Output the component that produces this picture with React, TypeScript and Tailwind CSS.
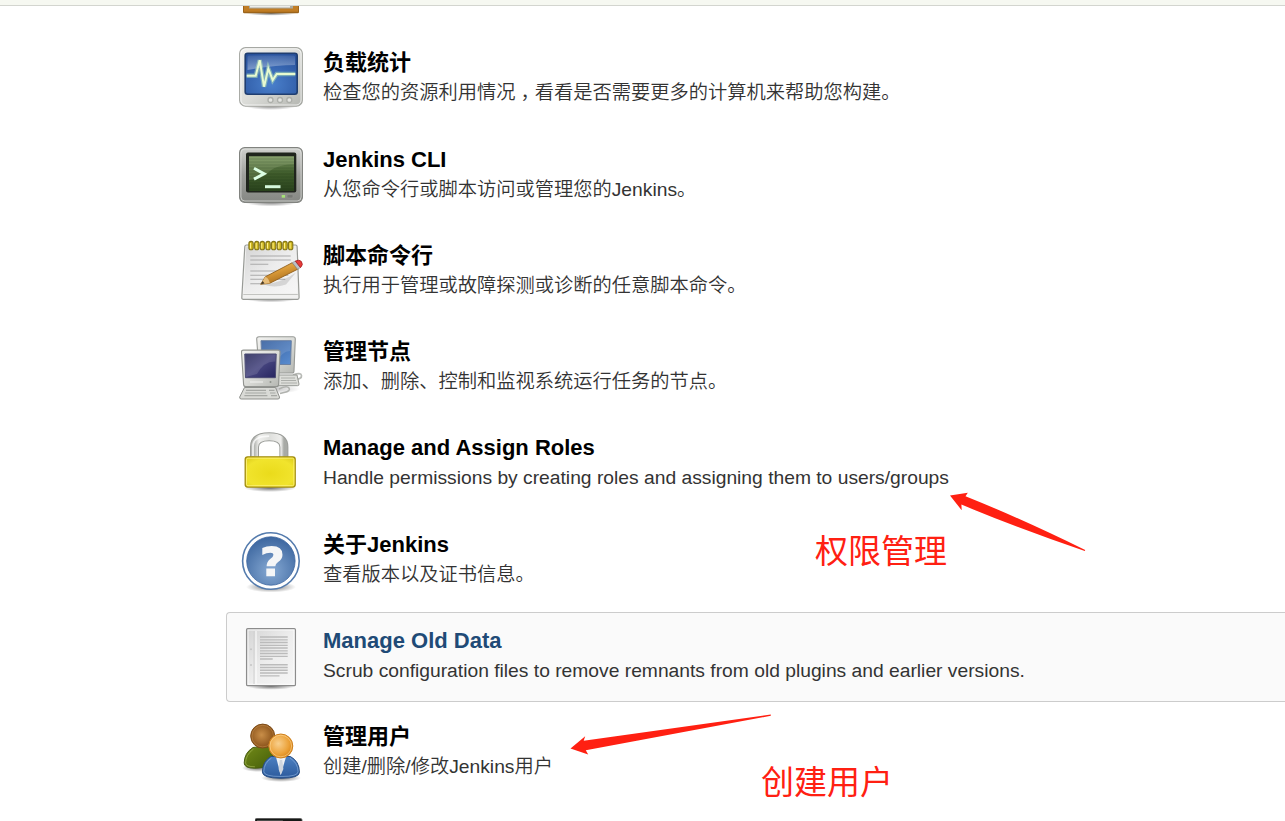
import type { ReactNode } from "react";

function Icon({ children }: { children: ReactNode }) {
  return (
    <svg className="block h-16 w-16 shrink-0 overflow-visible" viewBox="0 0 64 64">
      {children}
    </svg>
  );
}

function Gradients() {
  return (
    <svg className="absolute h-0 w-0" aria-hidden="true">
      <defs>
        <linearGradient id="case" x1="0" y1="0" x2="1" y2="1">
          <stop offset="0" stopColor="#f2f2f0" />
          <stop offset="0.5" stopColor="#dcddd9" />
          <stop offset="1" stopColor="#b4b6b1" />
        </linearGradient>
        <linearGradient id="caseDark" x1="0" y1="0" x2="0" y2="1">
          <stop offset="0" stopColor="#d0d1ce" />
          <stop offset="0.5" stopColor="#9fa09c" />
          <stop offset="1" stopColor="#858783" />
        </linearGradient>
        <radialGradient id="blue" cx="0.5" cy="0.75" r="0.8">
          <stop offset="0" stopColor="#4a80cc" />
          <stop offset="1" stopColor="#27509a" />
        </radialGradient>
        <linearGradient id="gloss" x1="0" y1="0" x2="0" y2="1">
          <stop offset="0" stopColor="#fff" stopOpacity="0.1" />
          <stop offset="1" stopColor="#fff" stopOpacity="0.36" />
        </linearGradient>
        <linearGradient id="green" x1="0" y1="0" x2="0" y2="1">
          <stop offset="0" stopColor="#7a9560" />
          <stop offset="0.5" stopColor="#3f5c2b" />
          <stop offset="1" stopColor="#2a431d" />
        </linearGradient>
        <linearGradient id="navy" x1="0" y1="0" x2="1" y2="1">
          <stop offset="0" stopColor="#252657" />
          <stop offset="0.5" stopColor="#46457f" />
          <stop offset="1" stopColor="#26245f" />
        </linearGradient>
        <linearGradient id="screen" x1="0" y1="0" x2="1" y2="1">
          <stop offset="0" stopColor="#315b9c" />
          <stop offset="1" stopColor="#5a8dd0" />
        </linearGradient>
        <linearGradient id="pencil" x1="0" y1="0" x2="0.5" y2="1">
          <stop offset="0" stopColor="#f5cc73" />
          <stop offset="0.5" stopColor="#d99a38" />
          <stop offset="1" stopColor="#a66a19" />
        </linearGradient>
        <radialGradient id="yellow" cx="0.5" cy="0.55" r="0.75">
          <stop offset="0" stopColor="#eadb1b" />
          <stop offset="0.65" stopColor="#f1e42d" />
          <stop offset="1" stopColor="#d7c516" />
        </radialGradient>
        <linearGradient id="metal" x1="0" y1="0" x2="1" y2="0">
          <stop offset="0" stopColor="#b5b7b3" />
          <stop offset="0.15" stopColor="#f0f0ee" />
          <stop offset="0.5" stopColor="#dedfdc" />
          <stop offset="0.9" stopColor="#eeeeec" />
          <stop offset="1" stopColor="#a8aaa6" />
        </linearGradient>
        <radialGradient id="help" cx="0.5" cy="0.7" r="0.7">
          <stop offset="0" stopColor="#86a9d3" />
          <stop offset="1" stopColor="#3c669f" />
        </radialGradient>
        <radialGradient id="brown" cx="0.45" cy="0.45" r="0.55">
          <stop offset="0" stopColor="#c98e48" />
          <stop offset="1" stopColor="#885018" />
        </radialGradient>
        <radialGradient id="orange" cx="0.4" cy="0.4" r="0.6">
          <stop offset="0" stopColor="#f8cf8d" />
          <stop offset="0.7" stopColor="#eca33b" />
          <stop offset="1" stopColor="#dc8a1d" />
        </radialGradient>
        <linearGradient id="olive" x1="0" y1="0" x2="1" y2="1">
          <stop offset="0" stopColor="#738b19" />
          <stop offset="1" stopColor="#445d08" />
        </linearGradient>
        <linearGradient id="shirt" x1="0" y1="0" x2="0" y2="1">
          <stop offset="0" stopColor="#4d80c1" />
          <stop offset="1" stopColor="#2c5a9c" />
        </linearGradient>
        <linearGradient id="paper" x1="0" y1="0" x2="1" y2="1">
          <stop offset="0" stopColor="#d4d4d4" />
          <stop offset="0.5" stopColor="#ededed" />
          <stop offset="1" stopColor="#f6f6f6" />
        </linearGradient>
        <radialGradient id="shade">
          <stop offset="0" stopColor="#000" stopOpacity="0.55" />
          <stop offset="1" stopColor="#000" stopOpacity="0" />
        </radialGradient>
      </defs>
    </svg>
  );
}

const LoadIcon = () => (
  <Icon>
    <ellipse cx="32" cy="58.5" rx="27" ry="4.5" fill="url(#shade)" />
    <rect x="0.6" y="0.6" width="62.8" height="58.6" rx="6" fill="url(#case)" stroke="#a6a8a3" strokeWidth="1.1" />
    <rect x="1.9" y="1.8" width="60.2" height="56.2" rx="5" fill="none" stroke="#fff" strokeOpacity="0.7" />
    <rect x="6.2" y="6.2" width="52" height="41" rx="2.5" fill="url(#blue)" stroke="#203e70" strokeWidth="1.6" />
    <path d="M8.5 10q0-1.5 1.5-1.5h44.5q1.5 0 1.5 1.5v8Q35 18 8.5 23z" fill="url(#gloss)" />
    <path d="M7.7 28.7h9l4-15.5 4.3 26.5 4.3-18 4.4 11.3 4-6h18.6" fill="none" stroke="#b8e7b5" strokeOpacity="0.5" strokeWidth="4.4" />
    <path d="M7.7 28.7h9l4-15.5 4.3 26.5 4.3-18 4.4 11.3 4-6h18.6" fill="none" stroke="#e7fad0" strokeWidth="2" />
    {[31.5, 41, 50.3].map((x) => (
      <circle key={x} cx={x} cy="53" r="2.5" fill="#e4e5e2" stroke="#adafaa" strokeWidth="1.3" />
    ))}
  </Icon>
);

const TerminalIcon = () => (
  <Icon>
    <ellipse cx="32" cy="59" rx="27" ry="4.5" fill="url(#shade)" />
    <rect x="0.6" y="4.7" width="62.8" height="54.6" rx="5" fill="url(#caseDark)" stroke="#81837f" strokeWidth="1.2" />
    <rect x="1.9" y="6" width="60.2" height="52" rx="4" fill="none" stroke="#e6e7e4" strokeOpacity="0.7" />
    <rect x="7" y="9.5" width="50.3" height="40" rx="2" fill="#20251d" />
    <rect x="10" y="13.3" width="45" height="34.7" fill="url(#green)" />
    <path d="M10 13.3h45v8Q35 22 28 31 20 37 10 37z" fill="#b5c99c" fillOpacity="0.22" />
    {[16, 19, 22, 25, 28, 31, 34, 37, 40, 43, 46].map((y) => (
      <path key={y} d={`M10 ${y}h45`} stroke="#142e0c" strokeOpacity="0.16" />
    ))}
    <path d="M15 25.3l10 5.4-10 5.4" fill="none" stroke="#dcffe4" strokeWidth="3" />
    <path d="M26 43.7h15.5" stroke="#d5f8dc" strokeWidth="3" />
    <rect x="42.7" y="52" width="3.4" height="2.7" fill="#a5e276" />
    <rect x="48" y="51.6" width="6" height="3.4" rx="1" fill="#777975" stroke="#92948f" strokeWidth="0.7" />
  </Icon>
);

const NotepadIcon = () => (
  <Icon>
    <ellipse cx="32" cy="59.5" rx="27" ry="4" fill="url(#shade)" />
    <path d="M7.5 6h49q1.5 0 1.6 1.5l2 51q0 1.8-1.6 1.8h-54q-1.8 0-1.7-1.8l3-51Q6 6 7.5 6z" fill="#f1f1f0" stroke="#989a96" strokeWidth="1.2" />
    <path d="M7.3 7.5h49.5L58.2 54H5z" fill="url(#paper)" />
    <path d="M4.3 55.5h54.5" stroke="#c3c4c1" strokeWidth="1.2" />
    <g stroke="#aaa" strokeWidth="1.1">
      <path d="M11.3 17h40.4M11.3 21h40.4M11.3 25.3h18M11.3 32h40.4M11.3 36.3h38M11.3 40.3h35M11.3 44.7h18" />
    </g>
    {[12, 17.7, 23.3, 29, 34.6, 40.3, 46, 51.6].map((x) => (
      <g key={x}>
        <rect x={x - 2.1} y="2.4" width="4.3" height="8.4" rx="2.1" fill="#d0b820" stroke="#857618" strokeWidth="1.1" />
        <path d={`M${x - 0.5} 4v5.5`} stroke="#fff189" strokeWidth="1" />
      </g>
    ))}
    <path d="M25 45.5q18-2 32-12l-10 12q-12 4-22 0z" fill="#555" fillOpacity="0.18" />
    <path d="M21.7 45.3l4.6-7.5 27-14.1 5.4 6.5-27.8 14z" fill="url(#pencil)" stroke="#92601d" strokeWidth="0.9" />
    <path d="M21.7 45.3l4.6-7.5q3.5 1.5 4.6 6.4z" fill="#e7bd7a" />
    <path d="M21.7 45.3l2-3.4 1.9 2.6z" fill="#443826" />
    <path d="M53.3 23.7l3-1.6 5.2 6.5-2.8 1.6z" fill="#bbc0c5" stroke="#898c90" strokeWidth="0.6" />
    <path d="M56.3 22.1q4-2 6 .3 2.5 3.2-.8 6.2z" fill="#e83b38" stroke="#a31e20" strokeWidth="0.8" />
  </Icon>
);

const NodesIcon = () => (
  <Icon>
    <ellipse cx="31" cy="53" rx="30" ry="5" fill="url(#shade)" opacity="0.5" />
    <path d="M54 39q8-3 8.5 0.5T56 43.5" fill="none" stroke="#b8bab6" strokeWidth="1.7" />
    <path d="M38 39h20l2 9q.2 1.7-1.5 1.7H38z" fill="#dddeda" stroke="#969894" />
    <path d="M42 42h14M42 44.5h15M42 47h16" stroke="#acaeaa" strokeWidth="1" />
    <path d="M20 .8h34q2.2 0 2.3 2L55 35q0 2-2 2H22q-2 0-2-2L17.7 3q0-2.2 2.3-2.2z" fill="url(#case)" stroke="#989a96" strokeWidth="1.1" />
    <path d="M22 4.7h30.3l-.8 23.8H23z" fill="url(#screen)" stroke="#6b81a3" />
    <path d="M22.5 5.3h29.2L51 15Q43 15 36 28H23.2z" fill="#fff" fillOpacity="0.12" />
    <path d="M40 53q8-4 10-1t-5 4.5l-4 1" fill="none" stroke="#b0b2ae" strokeWidth="1.5" />
    <path d="M5.5 51.5h31l4 9.5q.3 2-1.5 2H2.2q-1.8 0-1.5-2z" fill="#d9dad6" stroke="#8e908c" />
    <path d="M7 54.3h20M6.2 57h21M5.4 59.7h23M30 54.3h5.5M31 57h5.5M32 59.7h6" stroke="#a6a8a4" strokeWidth="1.2" />
    <path d="M4.5 14.1h34.5q2.1 0 2 2.1l-1.4 32.4q0 2-2 2H6.6q-2 0-2-2L2.5 16q0-1.9 2-1.9z" fill="url(#case)" stroke="#929490" strokeWidth="1.1" />
    <path d="M5.8 18h31.4l-.8 23.7H6.5z" fill="url(#navy)" stroke="#4a4a73" />
    <path d="M6 18.5h30.7l-.3 7Q25 25 18 38L6.7 41z" fill="#fff" fillOpacity="0.12" />
    <circle cx="31.5" cy="46" r="1" fill="#8f928d" />
    <path d="M11 46h13" stroke="#f2f2f0" />
  </Icon>
);

const LockIcon = () => (
  <Icon>
    <ellipse cx="31" cy="56" rx="26" ry="4" fill="url(#shade)" />
    <path d="M15.5 26V15Q15.5 4.7 30.2 4.7T44.9 15v11" fill="none" stroke="#9b9d99" strokeWidth="9" />
    <path d="M15.5 26V15Q15.5 4.7 30.2 4.7T44.9 15v11" fill="none" stroke="url(#metal)" strokeWidth="7" />
    <path d="M14 24V14Q14 4.2 30.2 4.2" fill="none" stroke="#fff" strokeOpacity="0.75" strokeWidth="1.8" />
    <rect x="6.2" y="24.8" width="50" height="30.3" rx="2.5" fill="url(#yellow)" stroke="#a18c12" strokeWidth="1.3" />
    <rect x="7.5" y="26.2" width="47.4" height="27.5" rx="1.5" fill="none" stroke="#fff47e" strokeOpacity="0.8" />
  </Icon>
);

const HelpIcon = () => (
  <Icon>
    <ellipse cx="32" cy="59" rx="25" ry="5.5" fill="url(#shade)" />
    <circle cx="31.9" cy="33" r="28.3" fill="#fff" stroke="#547bad" strokeWidth="1.6" />
    <circle cx="31.9" cy="33" r="24.2" fill="url(#help)" stroke="#3c669f" strokeWidth="0.8" />
    <path d="M23.3 27V20Q27.5 18 32.7 18q10.8 0 10.8 8.7 0 4.2-4.4 7.4-2.800 2-2.800 4.200h-8.700q0-4.600 3.600-7.400 3.200-2.200 3.200-4 0-2.200-3-2.200-3.800 0-8.100 2.300zM27.300 40.500H36v7.700h-8.700z" fill="#f5f6f7" />
  </Icon>
);

const DocumentIcon = () => (
  <Icon>
    <ellipse cx="32" cy="61.3" rx="24" ry="3.5" fill="url(#shade)" />
    <rect x="7.6" y="3.6" width="48.8" height="57" rx="1.2" fill="url(#paper)" stroke="#8c8c8c" strokeWidth="1.3" />
    <rect x="9" y="5" width="46" height="54.2" fill="none" stroke="#fff" strokeOpacity="0.8" />
    <path d="M15 6v53" stroke="#d0d0d0" />
    <path d="M17 6v53" stroke="#fff" />
    <circle cx="12" cy="24.2" r="1" fill="#c5c5c5" />
    <circle cx="12" cy="40" r="1" fill="#c5c5c5" />
    <path d="M21 12h27.7M21 14.8h27.7M21 17.5h27.7M21 20.3h27.7M21 23h27.7M21 25.8h27.7M21 28.5h27.7M21 31.3h27.7M21 34h12.7M21 39.7h27.7M21 42.5h27.7M21 45.2h27.7M21 48h27.7M21 50.8h19.5" stroke="#bbb" strokeWidth="1.35" />
  </Icon>
);

const UsersIcon = () => (
  <Icon>
    <ellipse cx="19" cy="47" rx="16" ry="4" fill="url(#shade)" />
    <ellipse cx="42" cy="57" rx="20" ry="4" fill="url(#shade)" />
    <path d="M14 26.5Q5.2 32 5.2 42q0 5.2 10.5 5.2T34 44V29l-7-4z" fill="url(#olive)" stroke="#485d11" />
    <path d="M14.5 28Q6.5 34 6.6 42q.2 3.8 9.3 3.8" fill="none" stroke="#a0b451" strokeOpacity="0.7" />
    <circle cx="23.7" cy="15.1" r="12" fill="url(#brown)" stroke="#7e4c18" />
    <circle cx="23.7" cy="15.1" r="10.8" fill="none" stroke="#d5a05e" strokeOpacity="0.4" />
    <path d="M32 35.5q-8.7 5-8.6 15.5 0 6.2 18.7 6.2T60.4 51q0-10.5-9-15.5z" fill="url(#shirt)" stroke="#294e83" />
    <path d="M32.5 37q-7.6 5-7.7 13.5 0 5 17.3 5t17-5Q59 42 51 37" fill="none" stroke="#8fb4df" strokeOpacity="0.6" />
    <path d="M37 36h10l-5.3 18z" fill="#eef1f5" />
    <path d="M40.8 39h2.4l1.2 9-2.7 6-2.1-6z" fill="#d0d6de" />
    <circle cx="41.8" cy="25" r="12" fill="url(#orange)" stroke="#ce811f" />
    <circle cx="41.8" cy="25" r="10.8" fill="none" stroke="#ffda9b" strokeOpacity="0.6" />
  </Icon>
);

type Entry = { icon: ReactNode; title: string; text: ReactNode; selected?: boolean };

const entries: Entry[] = [
  {
    icon: <LoadIcon />,
    title: "负载统计",
    text: (
      <>
        检查您的资源利用情况<span className="ml-[5px] tracking-[-5px]">，</span>看看是否需要更多的计算机来帮助您构建。
      </>
    ),
  },
  { icon: <TerminalIcon />, title: "Jenkins CLI", text: "从您命令行或脚本访问或管理您的Jenkins。" },
  { icon: <NotepadIcon />, title: "脚本命令行", text: "执行用于管理或故障探测或诊断的任意脚本命令。" },
  { icon: <NodesIcon />, title: "管理节点", text: "添加、删除、控制和监视系统运行任务的节点。" },
  { icon: <LockIcon />, title: "Manage and Assign Roles", text: "Handle permissions by creating roles and assigning them to users/groups" },
  { icon: <HelpIcon />, title: "关于Jenkins", text: "查看版本以及证书信息。" },
  {
    icon: <DocumentIcon />,
    title: "Manage Old Data",
    text: "Scrub configuration files to remove remnants from old plugins and earlier versions.",
    selected: true,
  },
  { icon: <UsersIcon />, title: "管理用户", text: "创建/删除/修改Jenkins用户" },
];

function Row({ icon, title, text, selected }: Entry) {
  return (
    <li className="h-[96.3px]">
      <a
        className={
          selected
            ? "flex h-[90px] rounded-l-[4px] border border-r-0 border-[#ccc] bg-[#fafafa] pl-3 pt-[11.5px]"
            : "flex h-[90px] border border-transparent pl-3 pt-[11.5px]"
        }
      >
        {icon}
        <div className="-mt-[0.5px] ml-5 whitespace-nowrap">
          <div className={selected ? "h-[33px] text-[22px] leading-[33px] font-bold text-[#204a76]" : "h-[33px] text-[22px] leading-[33px] font-bold text-black"}>
            {title}
          </div>
          <div className="h-[28px] text-[19.25px] leading-[28px] font-[350] text-[#333]">{text}</div>
        </div>
      </a>
    </li>
  );
}

export default function App() {
  return (
    <div className="relative h-[821px] w-full overflow-hidden bg-white font-['Liberation_Sans','Noto_Sans_CJK_SC',sans-serif]" lang="zh-CN">
      <Gradients />
      <header className="h-[6px] border-b border-[#d3d5cf] bg-[#f6f8f1]" />
      <main className="pl-[226px]">
        <div className="h-[28.3px] pl-[17px]">
          <svg className="block h-[11px] w-[56px]" viewBox="0 0 56 11">
            <ellipse cx="28" cy="7.5" rx="25" ry="2.2" fill="url(#shade)" />
            <path d="M0 0h56v6q0 1.3-1.3 1.3H1.3Q0 7.3 0 6z" fill="#9b641b" />
            <path d="M1 0h54v5.8H1z" fill="#c17d24" />
            <path d="M6 0h44v2.5H6z" fill="#aaa99f" />
            <path d="M7 0h40v1.4H7z" fill="#ededea" />
          </svg>
        </div>
        <ul>
          {entries.map((entry) => (
            <Row key={entry.title} {...entry} />
          ))}
        </ul>
        <div className="pl-[29px] pt-[13.3px]">
          <svg className="block h-[6px] w-[48px]" viewBox="0 0 48 6">
            <path d="M1.5.5h44q1.5 0 1.5 1.5v4H0V2Q0 .5 1.5.5z" fill="#161816" stroke="#555" strokeWidth="0.8" />
            <path d="M2 2h26l-1 4H2z" fill="#4a4c4a" />
          </svg>
        </div>
      </main>
      <svg className="absolute left-[940px] top-[480px] h-[80px] w-[160px]" viewBox="940 480 160 80">
        <path d="M950 495.4L967.8 492.7 965.5 496.2Q1020 518 1085.2 550L1084.8 551Q1020 529 961.4 504.6L961.7 510.3Z" fill="#ff2012" />
      </svg>
      <svg className="absolute left-[560px] top-[705px] h-[60px] w-[220px]" viewBox="560 705 220 60">
        <path d="M570.5 748.6L585.2 736.2 583.7 740.7 770.8 714.6 770.8 715.8 585.8 750.3 588.2 754.6Z" fill="#ff2012" />
      </svg>
      <div className="absolute left-[815px] top-[528px] text-[33px] leading-[48px] text-[#ff2012]">权限管理</div>
      <div className="absolute left-[761px] top-[759px] text-[33px] leading-[48px] text-[#ff2012]">创建用户</div>
    </div>
  );
}
